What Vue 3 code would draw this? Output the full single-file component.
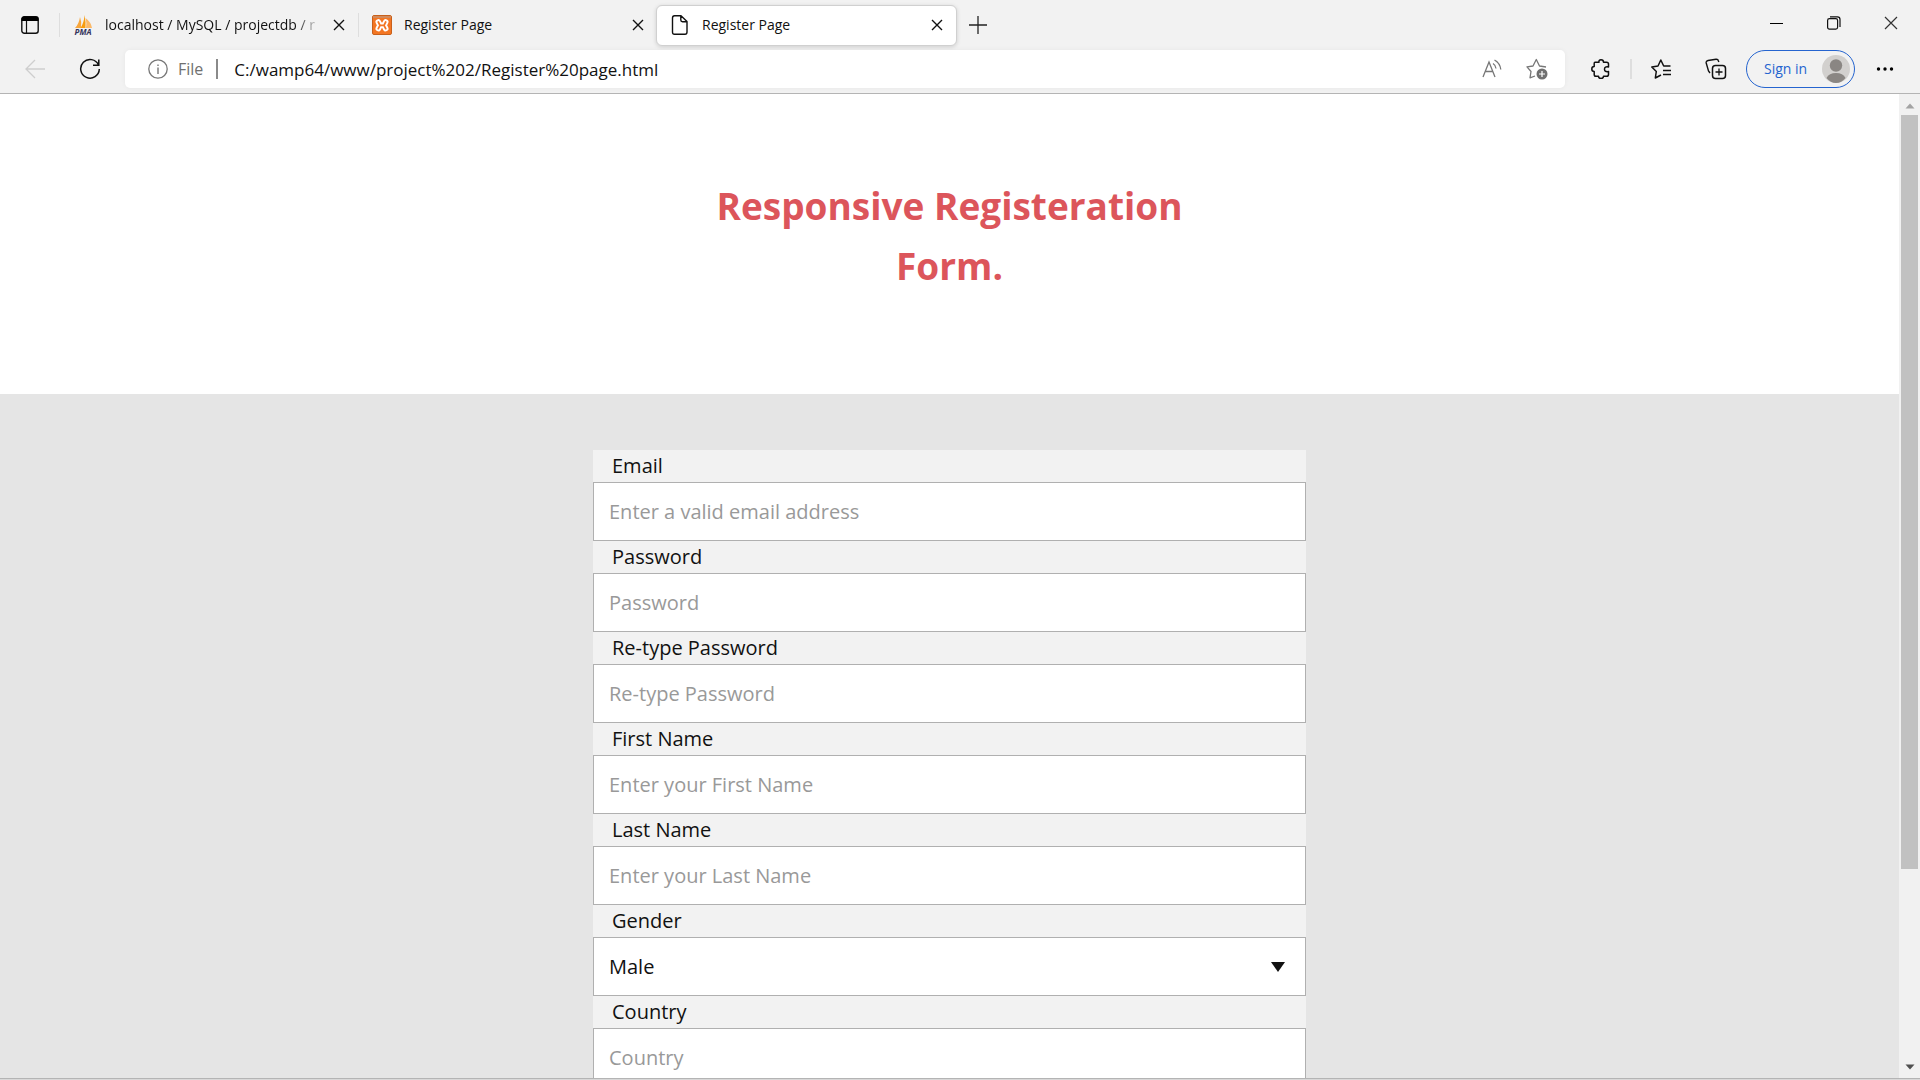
<script setup>
const fields = [
  { id: 'email', label: 'Email', type: 'email', placeholder: 'Enter a valid email address' },
  { id: 'password', label: 'Password', type: 'password', placeholder: 'Password' },
  { id: 'confirm', label: 'Re-type Password', type: 'password', placeholder: 'Re-type Password' },
  { id: 'first-name', label: 'First Name', type: 'text', placeholder: 'Enter your First Name' },
  { id: 'last-name', label: 'Last Name', type: 'text', placeholder: 'Enter your Last Name' },
  { id: 'gender', label: 'Gender', options: ['Male', 'Female'] },
  { id: 'country', label: 'Country', type: 'text', placeholder: 'Country' }
]
const tabs = [
  { id: 1, title: 'localhost / MySQL / projectdb / r', icon: 'pma' },
  { id: 2, title: 'Register Page', icon: 'xampp' },
  { id: 3, title: 'Register Page', icon: 'file', active: true }
]
</script>

<template>
  <div class="browser">
    <header class="chrome">
      <div class="tab-strip">
        <button class="icon-btn workspace" aria-label="Tab actions">
          <svg width="18" height="18" viewBox="0 0 18 18">
            <rect x="0.8" y="0.8" width="16.4" height="16.4" rx="2.5" fill="none" stroke="#111" stroke-width="1.4" />
            <path d="M0.5 5V3Q0.5 0.5 3 0.5H15Q17.5 0.5 17.5 3V5Z" fill="#000" />
            <path d="M5.5 5V17" stroke="#111" stroke-width="1.2" />
          </svg>
        </button>
        <div v-for="tab in tabs" :key="tab.id" class="tab" :class="{ active: tab.active }">
          <svg v-if="tab.icon === 'pma'" class="favicon" width="20" height="20" viewBox="0 0 20 20">
            <path d="M2 13Q6 9 7 2Q9 7 8 13Z" fill="#f8a63b" />
            <path d="M7.500 13Q11 8 11.500 0Q13 7 12.500 13Z" fill="#f89c0e" />
            <path d="M13 13Q14 8 12.500 3Q18 7 19 13Z" fill="#fbb968" />
            <text x="10" y="19.500" text-anchor="middle" class="pma-text">PMA</text>
          </svg>
          <svg v-else-if="tab.icon === 'xampp'" class="favicon" width="20" height="20" viewBox="0 0 20 20">
            <rect x="0.500" y="0.500" width="19" height="19" rx="1.500" fill="#f37623" stroke="#c8601b" />
            <path d="M1 1H19V3H1Z" fill="#d18a5c" />
            <g fill="none" stroke-linecap="round" stroke-linejoin="round">
              <path d="M6.300 7L8 10.300L6.300 13.600M13.700 7L12 10.300L13.700 13.600M8 10.300H12" stroke="#fff" stroke-width="5.600" />
              <path d="M6.300 7L8 10.300L6.300 13.600M13.700 7L12 10.300L13.700 13.600M8 10.300H12" stroke="#f37623" stroke-width="1.800" />
            </g>
          </svg>
          <svg v-else class="favicon" width="20" height="20" viewBox="0 0 20 20">
            <path d="M4.500 0.800H11L17 6.500V17Q17 19.200 15 19.200H4.500Q2.500 19.200 2.500 17V3Q2.500 0.800 4.500 0.800ZM10.800 1V5Q10.800 6.700 12.500 6.700H17" fill="none" stroke="#111" stroke-width="1.400" stroke-linejoin="round" />
          </svg>
          <span class="tab-title" :class="{ faded: tab.id === 1 }">{{ tab.title }}</span>
          <button class="icon-btn tab-close" aria-label="Close tab">
            <svg width="12" height="12" viewBox="0 0 12 12"><path d="M1 1L11 11M11 1L1 11" stroke="#111" stroke-width="1.400" /></svg>
          </button>
        </div>
        <button class="icon-btn new-tab" aria-label="New tab">
          <svg width="18" height="18" viewBox="0 0 18 18"><path d="M9 0V18M0 9H18" stroke="#222" stroke-width="1.300" /></svg>
        </button>
        <div class="window-controls">
          <button class="icon-btn" aria-label="Minimize">
            <svg width="14" height="14" viewBox="0 0 14 14"><path d="M0 7.500H13" stroke="#000" /></svg>
          </button>
          <button class="icon-btn" aria-label="Restore">
            <svg width="14" height="14" viewBox="0 0 14 14">
              <rect x="0.600" y="2.600" width="10" height="10.500" rx="1.800" fill="none" stroke="#111" stroke-width="1.200" />
              <path d="M3 0.800H10.500Q13 0.800 13 3.500V11" fill="none" stroke="#111" stroke-width="1.200" />
            </svg>
          </button>
          <button class="icon-btn" aria-label="Close window">
            <svg width="14" height="14" viewBox="0 0 14 14"><path d="M1 1L13 13M13 1L1 13" stroke="#333" stroke-width="1.200" /></svg>
          </button>
        </div>
      </div>

      <div class="toolbar">
        <button class="icon-btn nav" aria-label="Back">
          <svg width="20" height="20" viewBox="0 0 20 20"><path d="M20 10H1M10 1L1 10L10 19" fill="none" stroke="#cecece" stroke-width="1.300" /></svg>
        </button>
        <button class="icon-btn nav" aria-label="Refresh">
          <svg width="22" height="22" viewBox="0 0 22 22">
            <path d="M19.500 7A9.300 9.300 0 1 0 20.300 11M19.800 1.500V7.200H14" fill="none" stroke="#111" stroke-width="1.500" />
          </svg>
        </button>
        <div class="address">
          <svg class="info" width="20" height="20" viewBox="0 0 20 20">
            <circle cx="10" cy="10" r="9.200" fill="none" stroke="#777" stroke-width="1.300" />
            <path d="M10 8.500V15M10 5.500V7" stroke="#777" stroke-width="1.400" />
          </svg>
          <span class="scheme">File</span>
          <input class="url" type="text" aria-label="Address" value="C:/wamp64/www/project%202/Register%20page.html" />
          <button class="icon-btn" aria-label="Read aloud">
            <svg width="20" height="20" viewBox="0 0 20 20">
              <path d="M1 18L7 3L13 18M3.200 12.500H10.800" fill="none" stroke="#777" stroke-width="1.300" />
              <path d="M11 4.500Q13.500 6 14 9.500M12.500 1Q18 4 18.800 10.500" fill="none" stroke="#777" stroke-width="1.300" />
            </svg>
          </button>
          <button class="icon-btn" aria-label="Add to favorites">
            <svg width="22" height="22" viewBox="0 0 22 22">
              <path d="M9 18L4 19.800L5 13.500L1 8.800L7 8L10.300 1.500L13.500 8L20 9" fill="none" stroke="#777" stroke-width="1.300" stroke-linejoin="round" />
              <circle cx="16" cy="16" r="5.500" fill="#6f6f6f" />
              <path d="M16 13V19M13 16H19" stroke="#fff" stroke-width="1.200" />
            </svg>
          </button>
        </div>
        <div class="actions">
          <button class="icon-btn" aria-label="Extensions">
            <svg width="20" height="20" viewBox="0 0 20 20">
              <path d="M4 3.200H8Q7.500 0.800 10 0.800T12.500 3.200H15.500Q17.500 3.200 17.500 5V8Q13.500 7.200 13.500 10.200T17.500 12.500V15.500Q17.500 17.300 15.500 17.300H12.500Q12.500 19.500 10 19.500T7.500 17.300H5Q3.200 17.300 3.200 15.500V12.500Q0.800 12.500 0.800 10T3.200 7.500V4.500Q3.200 3.200 4 3.200Z" fill="none" stroke="#111" stroke-width="1.500" stroke-linejoin="round" />
            </svg>
          </button>
          <span class="divider"></span>
          <button class="icon-btn" aria-label="Favorites">
            <svg width="20" height="20" viewBox="0 0 20 20">
              <path d="M10 16L4.300 19L5.300 12.500L0.800 8L7 7L9.800 1L12.700 7H19.500M12 11.500H20M12 15.500H20" fill="none" stroke="#111" stroke-width="1.500" stroke-linejoin="round" />
            </svg>
          </button>
          <button class="icon-btn" aria-label="Collections">
            <svg width="22" height="22" viewBox="0 0 22 22">
              <path d="M5 15L3.500 13L1.200 5Q0.800 3 3 2.500L11 1.200Q13 1 13.500 3L13.800 4" fill="none" stroke="#111" stroke-width="1.400" />
              <rect x="7.500" y="7.500" width="13" height="13" rx="3" fill="none" stroke="#111" stroke-width="1.500" />
              <path d="M14 10.500V17.500M10.500 14H17.500" stroke="#111" stroke-width="1.300" />
            </svg>
          </button>
        </div>
        <button class="sign-in">
          <span>Sign in</span>
          <svg width="28" height="28" viewBox="0 0 28 28">
            <circle cx="14" cy="14" r="14" fill="#d2d0ce" />
            <circle cx="14" cy="10.500" r="6.200" fill="#8a8683" />
            <path d="M4.500 23Q7 18 14 18T23.500 23Q19.500 28 14 28T4.500 23Z" fill="#8a8683" />
          </svg>
        </button>
        <button class="icon-btn more" aria-label="Settings and more">
          <svg width="18" height="6" viewBox="0 0 18 6"><circle cx="2.500" cy="3" r="1.700" /><circle cx="9" cy="3" r="1.700" /><circle cx="15.500" cy="3" r="1.700" /></svg>
        </button>
      </div>
    </header>

    <div class="viewport">
      <main class="page">
        <section class="hero"><h1>Responsive Registeration Form.</h1></section>
        <section class="form-area">
          <form @submit.prevent>
            <div v-for="field in fields" :key="field.id" class="field">
              <label :for="field.id">{{ field.label }}</label>
              <div v-if="field.options" class="select-box">
                <select :id="field.id">
                  <option v-for="option in field.options" :key="option">{{ option }}</option>
                </select>
                <svg width="14" height="10" viewBox="0 0 14 10"><path d="M0 0H14L7 10Z" fill="#111" /></svg>
              </div>
              <input v-else :id="field.id" :type="field.type" :placeholder="field.placeholder" />
            </div>
          </form>
        </section>
      </main>
      <div class="scrollbar">
        <svg class="arrow" width="10" height="6" viewBox="0 0 10 6"><path d="M0.500 5.500L5 0.500L9.500 5.500Z" fill="#a3a3a3" /></svg>
        <div class="track"><div class="thumb"></div></div>
        <svg class="arrow" width="10" height="6" viewBox="0 0 10 6"><path d="M0.500 0.500L5 5.500L9.500 0.500Z" fill="#505050" /></svg>
      </div>
    </div>
  </div>
</template>

<style>
body {
  margin: 0;
  overflow: hidden;
}
</style>

<style scoped>
* {
  box-sizing: border-box;
}
.browser {
  display: flex;
  flex-direction: column;
  height: 100vh;
  padding-bottom: 1px;
  background: #d8d8d8;
  font-family: "Open Sans", "Noto Sans", sans-serif;
  color: #111;
}
button {
  font: inherit;
  margin: 0;
}
svg {
  display: block;
  flex: none;
}
.chrome {
  flex: none;
  background: #f2f2f2;
  border-bottom: 1px solid #b4b4b4;
}
.icon-btn {
  display: flex;
  align-items: center;
  justify-content: center;
  padding: 0;
  border: 0;
  background: none;
}
.tab-strip {
  display: flex;
  align-items: center;
  height: 50px;
}
.workspace {
  width: 59px;
  height: 50px;
}
.tab {
  display: flex;
  align-items: center;
  width: 299px;
  height: 24px;
  padding: 0 13px;
  border-left: 1px solid #dedede;
  font-size: 14px;
}
.tab.active {
  width: 301px;
  height: 41px;
  margin-left: -1px;
  border: 1px solid #d0d0d0;
  border-radius: 6px;
  background: #fff;
  box-shadow: 0 1px 4px rgba(0, 0, 0, 0.15);
  font-weight: 500;
}
.favicon {
  margin-right: 12px;
}
.pma-text {
  font: italic 700 8px "Open Sans", sans-serif;
  fill: #34345c;
}
.tab-title {
  flex: 1;
  min-width: 0;
  padding-bottom: 2px;
  overflow: hidden;
  white-space: nowrap;
}
.faded {
  background: linear-gradient(90deg, #111 88%, transparent);
  background-clip: text;
  color: transparent;
}
.tab-close {
  width: 12px;
  height: 24px;
  margin-left: 12px;
}
.new-tab {
  width: 42px;
  height: 41px;
}
.window-controls {
  display: flex;
  align-self: flex-start;
  margin-left: auto;
  padding-right: 1px;
}
.window-controls .icon-btn {
  width: 57px;
  height: 45px;
}
.toolbar {
  display: flex;
  align-items: center;
  height: 43px;
  padding: 0 26px 5px 7px;
}
.nav {
  width: 55px;
  height: 38px;
}
.address {
  display: flex;
  flex: 1;
  align-items: center;
  gap: 24px;
  height: 38px;
  margin-left: 8px;
  padding: 0 17px 0 23px;
  border-radius: 5px;
  background: #fff;
  box-shadow: 0 0 5px rgba(0, 0, 0, 0.05);
}
.info {
  margin-right: -14px;
}
.scheme {
  padding-right: 13px;
  margin-right: -8px;
  border-right: 2px solid #8a8a8a;
  color: #707070;
  font-size: 16px;
  line-height: 20px;
}
.url {
  flex: 1;
  min-width: 0;
  height: 30px;
  padding: 0;
  border: 0;
  outline: 0;
  background: none;
  color: #111;
  font: 17px "Open Sans", sans-serif;
}
.actions {
  display: flex;
  align-items: center;
  gap: 18px;
  padding: 0 19px 0 25px;
}
.actions .icon-btn {
  width: 22px;
}
.actions .icon-btn:last-child {
  margin-left: 15px;
}
.divider {
  width: 2px;
  height: 20px;
  background: #dedede;
}
.sign-in {
  display: flex;
  align-items: center;
  justify-content: space-between;
  width: 109px;
  height: 38px;
  padding: 0 4px 0 17px;
  border: 1px solid #2564cf;
  border-radius: 19px;
  background: none;
  color: #2564cf;
  font-size: 14px;
}
.sign-in span {
  padding-bottom: 2px;
}
.more {
  width: 18px;
  margin-left: 21px;
}
.viewport {
  display: flex;
  flex: 1;
  min-height: 0;
  border-bottom: 1px solid #b4b4b4;
}
.page {
  flex: 1;
  min-width: 0;
  overflow: hidden;
  background: #e5e5e5;
}
.hero {
  padding: 82px 20px 98px;
  background: #fff;
}
h1 {
  max-width: 500px;
  margin: 0 auto;
  color: #dc555b;
  font-size: 37px;
  font-weight: 700;
  line-height: 60px;
  text-align: center;
}
.form-area {
  padding: 56px 20px;
}
form {
  max-width: 713px;
  margin: 0 auto;
  background: #f2f2f2;
  font-size: 20px;
}
.field label {
  display: block;
  padding-left: 19px;
  line-height: 32px;
}
.field input,
.field select {
  display: block;
  width: 100%;
  height: 59px;
  padding: 0 15px;
  border: 1px solid #b0b0b0;
  border-radius: 0;
  outline: 0;
  background: #fff;
  color: #111;
  font: 20px "Open Sans", sans-serif;
  appearance: none;
}
.field input::placeholder {
  color: #999;
}
.select-box {
  display: grid;
  align-items: center;
}
.select-box > * {
  grid-area: 1 / 1;
}
.select-box svg {
  justify-self: end;
  margin-right: 21px;
  pointer-events: none;
}
.scrollbar {
  display: flex;
  flex-direction: column;
  align-items: center;
  gap: 6px;
  width: 21px;
  padding: 9px 0 8px;
  background: #f1f1f1;
}
.track {
  flex: 1;
  width: 17px;
}
.thumb {
  height: 80%;
  background: #c1c1c1;
}
</style>
